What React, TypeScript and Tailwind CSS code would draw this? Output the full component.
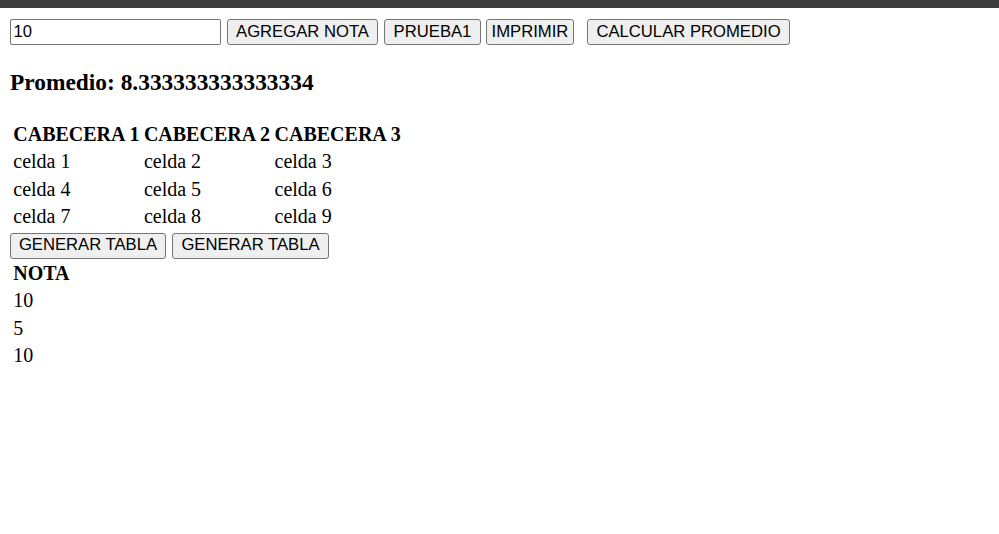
import React from "react";

const btn =
  "h-[26px] px-[7.5px] py-[1.25px] border border-[#767676] rounded-[3px] bg-[#efefef] text-black text-[16.67px] leading-none font-['Liberation_Sans',Arial,sans-serif] whitespace-nowrap";

const notas = [10, 5, 10];

export default function App() {
  return (
    <div className="min-h-screen bg-white text-black font-['Liberation_Serif','Times_New_Roman',serif] text-[20px]">
      {/* barra superior */}
      <div className="h-[8px] bg-[#3c3c3c]" />

      <div className="px-[10px] pt-[10px]">
        {/* controles */}
        <div className="flex items-center h-[29px] pb-[1px]">
          <input
            type="text"
            defaultValue="10"
            className="w-[211px] h-[26px] px-[2.5px] border border-[#767676] rounded-[2px] text-[16.67px] font-['Liberation_Sans',Arial,sans-serif] outline-none"
          />
          <button className={`${btn} ml-[6px] w-[151px]`}>AGREGAR NOTA</button>
          <button className={`${btn} ml-[6px] w-[97px]`}>PRUEBA1</button>
          <button className={`${btn} ml-[5px] w-[88px] !px-[3px]`}>IMPRIMIR</button>
          <button className={`${btn} ml-[13px] w-[203px]`}>CALCULAR PROMEDIO</button>
        </div>

        <h3 className="my-[23.4px] text-[23.4px] font-bold leading-[25.9px]">
          Promedio: 8.333333333333334
        </h3>

        {/* tabla fija */}
        <table className="border-separate border-spacing-[2px]">
          <thead>
            <tr>
              <th className="p-[1.25px] font-bold leading-[23px]">CABECERA 1</th>
              <th className="p-[1.25px] font-bold leading-[23px]">CABECERA 2</th>
              <th className="p-[1.25px] font-bold leading-[23px]">CABECERA 3</th>
            </tr>
          </thead>
          <tbody>
            {[
              ["celda 1", "celda 2", "celda 3"],
              ["celda 4", "celda 5", "celda 6"],
              ["celda 7", "celda 8", "celda 9"],
            ].map((row, i) => (
              <tr key={i}>
                {row.map((c) => (
                  <td key={c} className="p-[1.25px] text-left leading-[23px]">
                    {c}
                  </td>
                ))}
              </tr>
            ))}
          </tbody>
        </table>

        <div className="flex items-start h-[27px] pt-[1px]">
          <button className={`${btn} w-[156px]`}>GENERAR TABLA</button>
          <button className={`${btn} ml-[6px] w-[157px]`}>GENERAR TABLA</button>
        </div>

        {/* tabla de notas */}
        <table className="border-separate border-spacing-[2px]">
          <thead>
            <tr>
              <th className="p-[1.25px] font-bold text-left leading-[23px]">NOTA</th>
            </tr>
          </thead>
          <tbody>
            {notas.map((n, i) => (
              <tr key={i}>
                <td className="p-[1.25px] leading-[23px]">{n}</td>
              </tr>
            ))}
          </tbody>
        </table>
      </div>
    </div>
  );
}
